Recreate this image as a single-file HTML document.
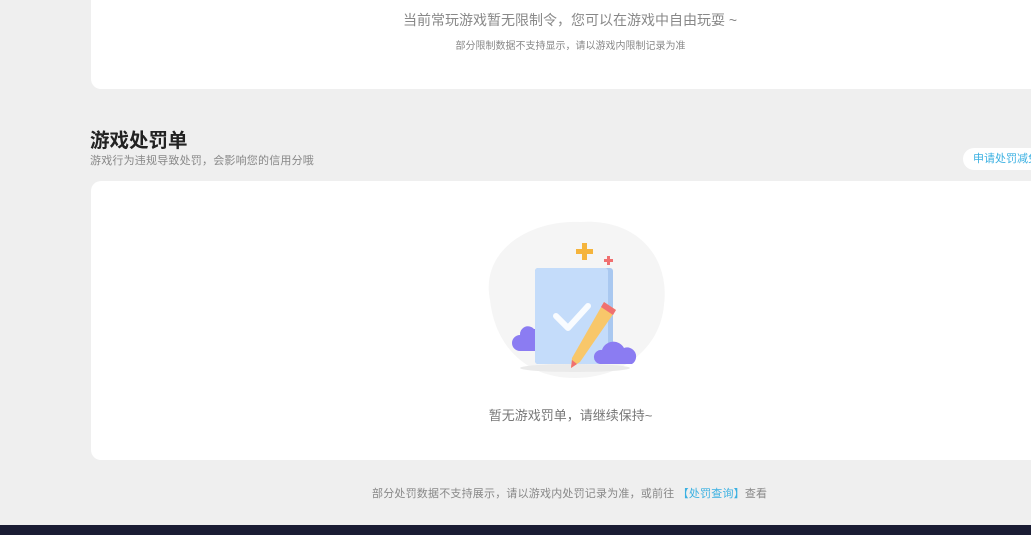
<!DOCTYPE html>
<html><head><meta charset="utf-8"><style>
body{margin:0;width:1031px;height:535px;background:#efefef;position:relative;overflow:hidden;font-family:"Liberation Sans","Noto Sans CJK SC",sans-serif}
.card{position:absolute;left:91px;background:#fff;border-radius:10px;width:960px}
.t{position:absolute;white-space:nowrap}
</style></head><body>
<div class="card" style="top:-20px;height:109px"></div>
<div class="t" style="left:0;width:1140px;text-align:center;top:10px;font-size:14px;color:#888">当前常玩游戏暂无限制令，您可以在游戏中自由玩耍 ~</div>
<div class="t" style="left:0;width:1141px;text-align:center;top:37px;font-size:10px;color:#888">部分限制数据不支持显示，请以游戏内限制记录为准</div>
<div class="t" style="left:90px;top:124px;font-size:19.5px;font-weight:bold;color:#222">游戏处罚单</div>
<div class="t" style="left:90px;top:152px;font-size:11px;color:#888;letter-spacing:0.2px">游戏行为违规导致处罚，会影响您的信用分哦</div>
<div class="t" style="left:963px;top:148px;height:22px;width:90px;background:#fff;border-radius:11px;font-size:11px;color:#3ab0e2;line-height:22px;padding-left:10px">申请处罚减免</div>
<div class="card" style="top:181px;height:279px"></div>
<svg class="t" style="left:480px;top:215px" width="190" height="170" viewBox="480 215 190 170">
<path d="M490 300 C480 250 530 220 580 222 C640 218 670 260 664 305 C660 350 620 378 575 378 C525 378 495 345 490 300Z" fill="#f5f5f5"/>
<ellipse cx="575" cy="368" rx="55" ry="4" fill="#eaeaea"/>
<path d="M520 335 a8 8 0 0 1 14 -6 h4 v22 h-18 a6 6 0 0 1 0 -16z" fill="#8b7cf2"/>
<rect x="535" y="268" width="78" height="96" rx="3" fill="#a9c8f0"/>
<rect x="535" y="268" width="73" height="96" rx="3" fill="#c4dcfa"/>
<path d="M556 316 l12 12 l20 -22" stroke="#fff" stroke-width="6" fill="none" stroke-linecap="round" stroke-linejoin="round" opacity=".9"/>
<path d="M604 302 l12 8 l-36 52 l-9 6 l1 -10z" fill="#f8c76a"/>
<path d="M604 302 l12 8 l-3 5 l-12 -8z" fill="#f07070"/>
<path d="M572 360 l-1 8 l6 -4z" fill="#f07070"/>
<path d="M602 350 a12 12 0 0 1 22 -2 a9 9 0 0 1 8 16 h-32 a7 7 0 0 1 2 -14z" fill="#8b7cf2"/>
<path d="M582 243 h5 v6 h6 v5 h-6 v6 h-5 v-6 h-6 v-5 h6z" fill="#f5b43c"/>
<path d="M607 256 h3 v3 h3 v3 h-3 v3 h-3 v-3 h-3 v-3 h3z" fill="#f07070"/>
</svg>
<div class="t" style="left:0;width:1141px;text-align:center;top:405px;font-size:13px;color:#777">暂无游戏罚单，请继续保持~</div>
<div class="t" style="left:372px;top:485px;font-size:11px;color:#888;letter-spacing:0.2px">部分处罚数据不支持展示，请以游戏内处罚记录为准，或前往 <span style="color:#3ab0e2">【处罚查询】</span>查看</div>
<div style="position:absolute;left:0;top:525px;width:1031px;height:10px;background:#1a1c33"></div>
</body></html>
